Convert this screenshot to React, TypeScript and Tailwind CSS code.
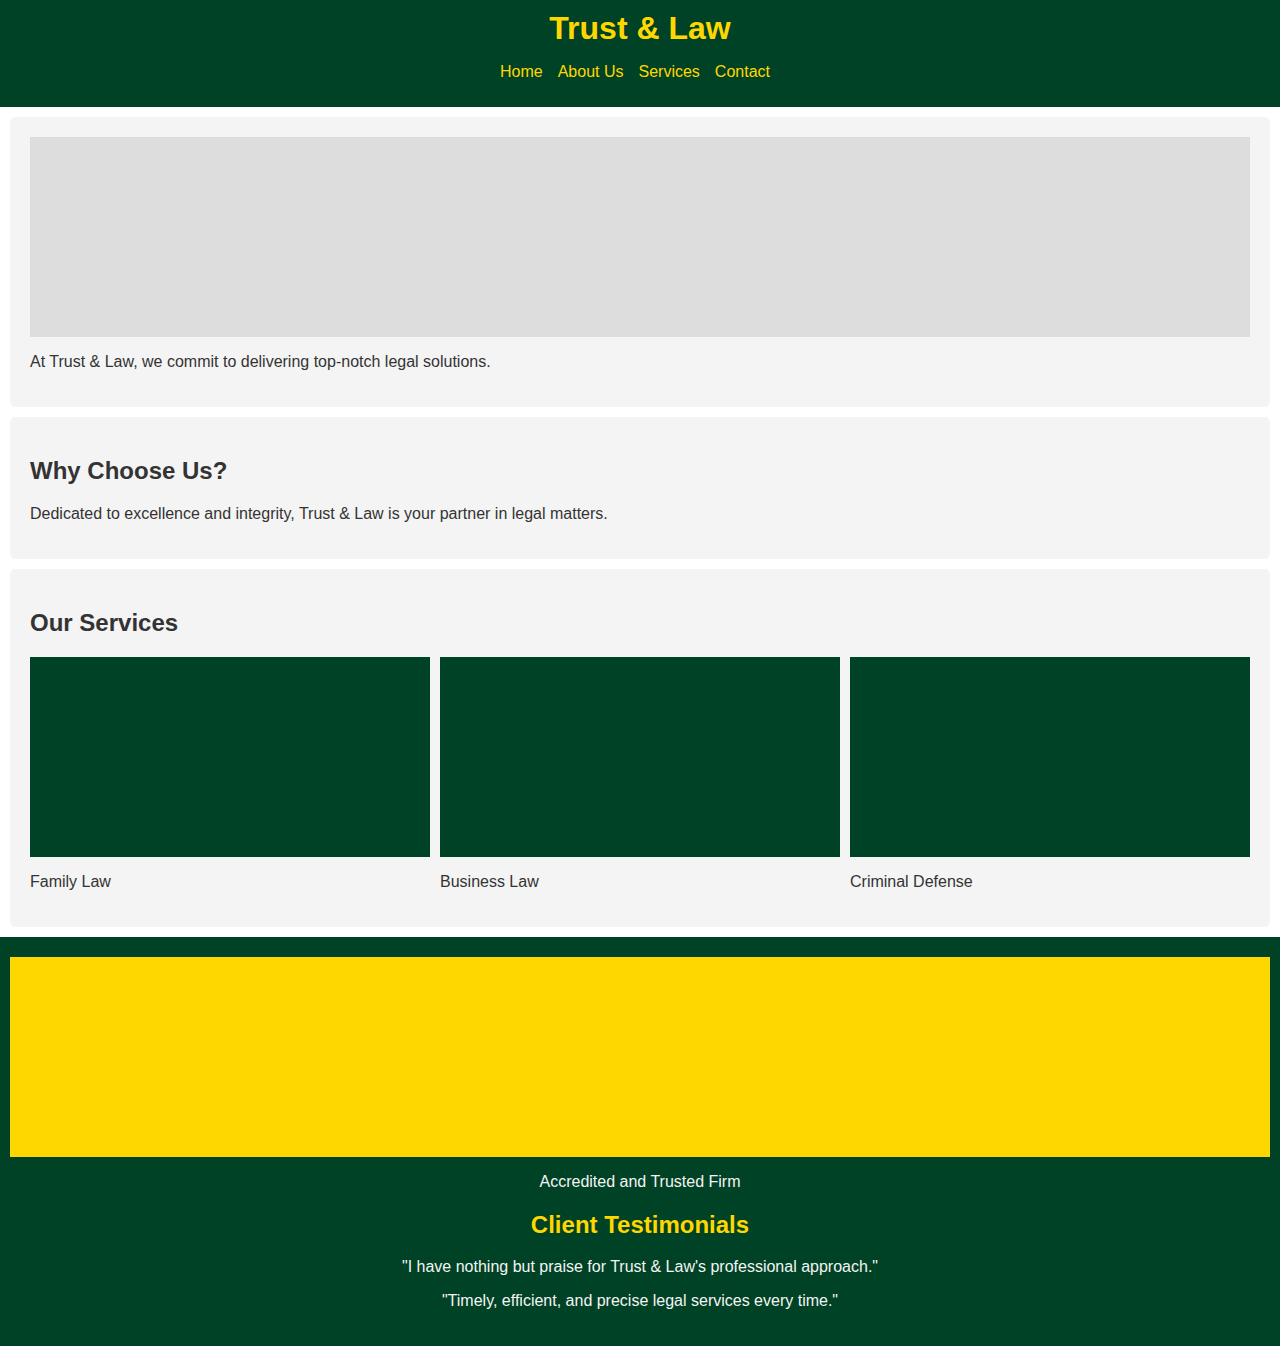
export default function App() {
  const services = ['Family Law', 'Business Law', 'Criminal Defense'];

  return (
    <div className="min-h-[1346px] bg-white font-['Liberation_Sans',Arial,sans-serif] text-[#333] text-base leading-[normal]">
      {/* Header */}
      <header className="bg-[#004225] p-[10px] text-center">
        <h1 className="text-[32px] font-bold text-[#FFD700] leading-[normal]">Trust &amp; Law</h1>
        <nav>
          <ul className="my-4 mr-[10px] flex justify-center gap-[15px]">
            <li><a href="#" className="text-[#FFD700]">Home</a></li>
            <li><a href="#" className="text-[#FFD700]">About Us</a></li>
            <li><a href="#" className="text-[#FFD700]">Services</a></li>
            <li><a href="#" className="text-[#FFD700]">Contact</a></li>
          </ul>
        </nav>
      </header>

      {/* Hero */}
      <section className="m-[10px] rounded-[5px] bg-[#f4f4f4] p-5">
        <div className="h-[200px] bg-[#ddd]"></div>
        <p className="my-4">At Trust &amp; Law, we commit to delivering top-notch legal solutions.</p>
      </section>

      {/* Why */}
      <section className="m-[10px] rounded-[5px] bg-[#f4f4f4] p-5">
        <h2 className="my-[0.83em] text-2xl font-bold leading-[normal]">Why Choose Us?</h2>
        <p className="my-4">Dedicated to excellence and integrity, Trust &amp; Law is your partner in legal matters.</p>
      </section>

      {/* Services */}
      <section className="m-[10px] rounded-[5px] bg-[#f4f4f4] p-5">
        <h2 className="my-[0.83em] text-2xl font-bold leading-[normal]">Our Services</h2>
        <div className="grid grid-cols-3 gap-[10px]">
          {services.map((s) => (
            <div key={s}>
              <div className="h-[200px] bg-[#004225]"></div>
              <p className="my-4">{s}</p>
            </div>
          ))}
        </div>
      </section>

      {/* Footer */}
      <footer className="mt-[10px] bg-[#004225] px-[10px] pt-5 pb-5 text-center text-[#f4f4f4]">
        <div className="h-[200px] bg-[#FFD700]"></div>
        <p className="my-4">Accredited and Trusted Firm</p>
        <h2 className="my-[0.83em] text-2xl font-bold text-[#FFD700] leading-[normal]">Client Testimonials</h2>
        <p className="my-4">"I have nothing but praise for Trust &amp; Law's professional approach."</p>
        <p className="my-4">"Timely, efficient, and precise legal services every time."</p>
      </footer>
    </div>
  );
}
